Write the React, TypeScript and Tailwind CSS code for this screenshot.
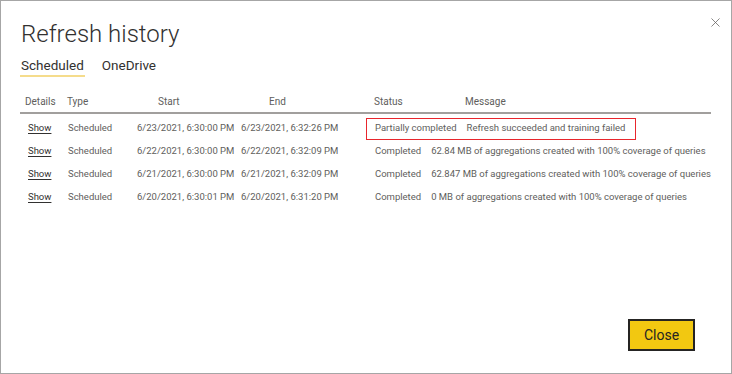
import { X } from 'lucide-react'

interface Row {
  start: string
  end: string
  status: string
  message: string
  flagged?: boolean
}

const rows: Row[] = [
  { start: '6/23/2021, 6:30:00 PM', end: '6/23/2021, 6:32:26 PM', status: 'Partially completed', message: 'Refresh succeeded and training failed', flagged: true },
  { start: '6/22/2021, 6:30:00 PM', end: '6/22/2021, 6:32:09 PM', status: 'Completed', message: '62.84 MB of aggregations created with 100% coverage of queries' },
  { start: '6/21/2021, 6:30:00 PM', end: '6/21/2021, 6:32:09 PM', status: 'Completed', message: '62.847 MB of aggregations created with 100% coverage of queries' },
  { start: '6/20/2021, 6:30:01 PM', end: '6/20/2021, 6:31:20 PM', status: 'Completed', message: '0 MB of aggregations created with 100% coverage of queries' },
]

export default function App() {
  return (
    <div className="w-[732px] h-[374px] bg-white font-['Roboto',sans-serif] whitespace-nowrap">
      <div className="relative w-full h-full border border-[#a6a6a6] flex flex-col px-[19px]">
        {/* close icon */}
        <button className="absolute top-[14px] right-[8px] text-[#605e5c]">
          <X size={15} strokeWidth={1.2} />
        </button>

        <h1 className="mt-[18px] ml-[1px] text-[24px] leading-[30px] font-light text-[#323130]">
          Refresh history
        </h1>

        {/* tabs */}
        <div className="flex gap-[17px] mt-[8px] text-[13.5px] leading-[17px] text-[#323130]">
          <div className="border-b-2 border-[#f5dc8c] pb-[1px] px-[1px]">Scheduled</div>
          <div>OneDrive</div>
        </div>

        {/* table header */}
        <div className="flex mt-[18px] text-[10px] leading-[13px] text-[#605e5c] pl-[5px] pb-[4px] border-b-2 border-[#a19f9d] w-[691px]">
          <div className="w-[42px] shrink-0">Details</div>
          <div className="w-[91px] shrink-0">Type</div>
          <div className="w-[111px] shrink-0">Start</div>
          <div className="w-[105px] shrink-0">End</div>
          <div className="w-[91px] shrink-0">Status</div>
          <div>Message</div>
        </div>

        {/* rows */}
        <div className="flex flex-col mt-[3px] text-[9.5px] text-[#605e5c]">
          {rows.map((r) => (
            <div key={r.start} className="flex items-center h-[23px] pl-[8px]">
              <div className="w-[40px] shrink-0 text-[#323130] underline underline-offset-2">Show</div>
              <div className="w-[69px] shrink-0">Scheduled</div>
              <div className="w-[104px] shrink-0">{r.start}</div>
              <div className="w-[125px] shrink-0">{r.end}</div>
              <div
                className={`flex items-center gap-[10px] h-[22px] pl-[8px] pr-[10px] border ${
                  r.flagged ? 'border-[#e8262d]' : 'border-transparent'
                }`}
              >
                <span>{r.status}</span>
                <span>{r.message}</span>
              </div>
            </div>
          ))}
        </div>

        <div className="flex-1" />

        {/* footer */}
        <div className="flex justify-end pr-[17px] pb-[22px]">
          <button className="w-[67px] h-[32px] bg-[#f2c811] border-2 border-[#252423] text-[14px] text-[#252423]">
            Close
          </button>
        </div>
      </div>
    </div>
  )
}
